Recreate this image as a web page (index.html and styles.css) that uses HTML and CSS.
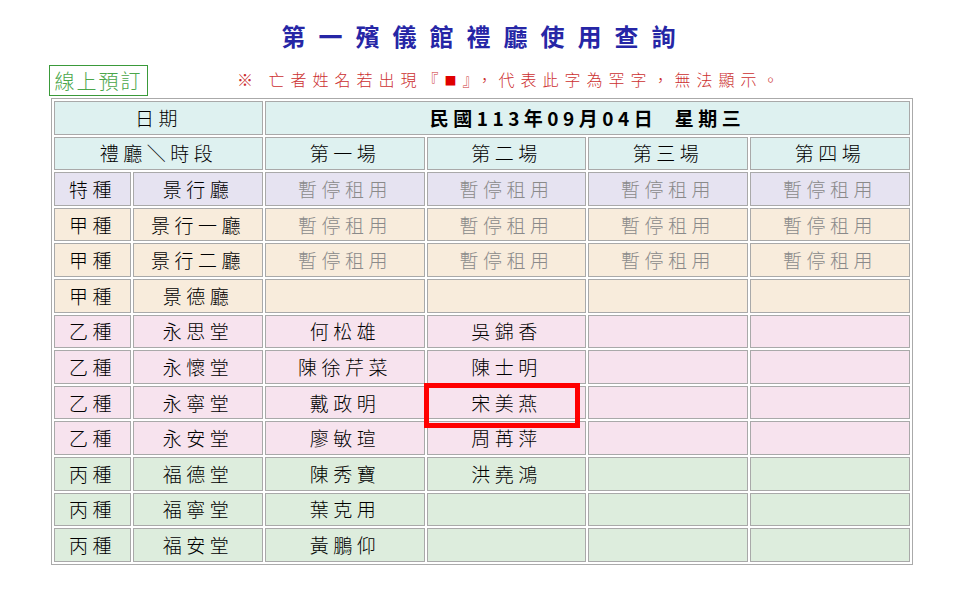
FILE: index.html
```html
<!DOCTYPE html>
<html lang="zh-Hant">
<head>
<meta charset="utf-8">
<title>第一殯儀館禮廳使用查詢</title>
<link rel="stylesheet" href="styles.css">
</head>
<body>
<div class="wrap">
  <h1 class="title">第一殯儀館禮廳使用查詢</h1>
  <div class="bar">
    <a class="book" href="#">線上預訂</a>
    <p class="notice">※ 亡者姓名若出現『<span class="sq">■</span>』，代表此字為罕字，無法顯示。</p>
  </div>
  <table class="grid">
    <colgroup>
      <col class="c1"><col class="c2"><col class="c3"><col class="c4"><col class="c5"><col class="c6">
    </colgroup>
    <tr class="head">
      <td colspan="2">日期</td>
      <td colspan="4" class="date">民國113年09月04日&nbsp;&nbsp;星期三</td>
    </tr>
    <tr class="head">
      <td colspan="2">禮廳＼時段</td>
      <td>第一場</td><td>第二場</td><td>第三場</td><td>第四場</td>
    </tr>
    <tr class="t-special">
      <td>特種</td><td>景行廳</td>
      <td class="off">暫停租用</td><td class="off">暫停租用</td><td class="off">暫停租用</td><td class="off">暫停租用</td>
    </tr>
    <tr class="t-a">
      <td>甲種</td><td>景行一廳</td>
      <td class="off">暫停租用</td><td class="off">暫停租用</td><td class="off">暫停租用</td><td class="off">暫停租用</td>
    </tr>
    <tr class="t-a">
      <td>甲種</td><td>景行二廳</td>
      <td class="off">暫停租用</td><td class="off">暫停租用</td><td class="off">暫停租用</td><td class="off">暫停租用</td>
    </tr>
    <tr class="t-a">
      <td>甲種</td><td>景德廳</td>
      <td></td><td></td><td></td><td></td>
    </tr>
    <tr class="t-b">
      <td>乙種</td><td>永思堂</td>
      <td>何松雄</td><td>吳錦香</td><td></td><td></td>
    </tr>
    <tr class="t-b">
      <td>乙種</td><td>永懷堂</td>
      <td>陳徐芹菜</td><td>陳士明</td><td></td><td></td>
    </tr>
    <tr class="t-b">
      <td>乙種</td><td>永寧堂</td>
      <td>戴政明</td><td class="marked"><span class="hl"></span>宋美燕</td><td></td><td></td>
    </tr>
    <tr class="t-b">
      <td>乙種</td><td>永安堂</td>
      <td>廖敏瑄</td><td>周苒萍</td><td></td><td></td>
    </tr>
    <tr class="t-c">
      <td>丙種</td><td>福德堂</td>
      <td>陳秀寶</td><td>洪堯鴻</td><td></td><td></td>
    </tr>
    <tr class="t-c">
      <td>丙種</td><td>福寧堂</td>
      <td>葉克用</td><td></td><td></td><td></td>
    </tr>
    <tr class="t-c">
      <td>丙種</td><td>福安堂</td>
      <td>黃鵬仰</td><td></td><td></td><td></td>
    </tr>
  </table>
</div>
</body>
</html>
```
FILE: styles.css
```css
* { box-sizing: border-box; }
html, body { margin: 0; padding: 0; background: #fff; }
body {
  font-family: "Noto Sans CJK TC", "Noto Sans", sans-serif;
  color: #000;
}
.wrap {
  width: 862px;
  margin-left: 51px;
}
.title {
  margin: 0;
  padding-top: 20px;
  height: 64px;
  line-height: 32px;
  font-size: 24px;
  font-weight: bold;
  letter-spacing: 13px;
  text-indent: 6px;
  color: #2626a6;
  text-align: center;
}
.bar {
  display: flex;
  align-items: center;
  margin-left: -2px;
  height: 34px;
  padding-top: 1px;
}
.book {
  display: block;
  width: 99px;
  height: 31px;
  border: 1px solid #3a9a3a;
  color: #4aa64a;
  font-size: 20px;
  font-weight: 300;
  line-height: 29px;
  letter-spacing: 2px;
  text-align: center;
  text-decoration: none;
  align-self: flex-start;
}
.notice {
  margin: 0 0 3px 89px;
  font-size: 16px;
  font-weight: 300;
  line-height: 20px;
  letter-spacing: 6px;
  color: #cc3030;
  white-space: nowrap;
}
.sq { color: #e00000; font-size: 12px; }
.grid {
  table-layout: fixed;
  width: 862px;
  border: 1px solid #aaa;
  border-spacing: 2px;
  font-size: 19px;
  font-weight: 300;
  letter-spacing: 4.5px;
}
.c1 { width: 77px; }
.c2 { width: 130px; }
.c3 { width: 160px; }
.c4 { width: 159px; }
.c5 { width: 160px; }
.c6 { width: 160px; }
.grid td {
  border: 1px solid #a9a9a9;
  height: 33.6px;
  padding: 0;
  text-align: center;
  vertical-align: middle;
  line-height: 24px;
  white-space: nowrap;
}
.head td { background: #def1f0; }
.grid td.date { font-weight: bold; }
.t-special td { background: #e6e3f1; }
.t-a td { background: #f8ecdc; }
.t-b td { background: #f7e3ee; }
.t-c td { background: #ddeddd; }
.grid td.off { color: #8a8a8a; }
.marked { position: relative; }
.hl {
  position: absolute;
  left: -4px;
  top: -4px;
  width: 156px;
  height: 45px;
  border: 5px solid #f00;
}
```
